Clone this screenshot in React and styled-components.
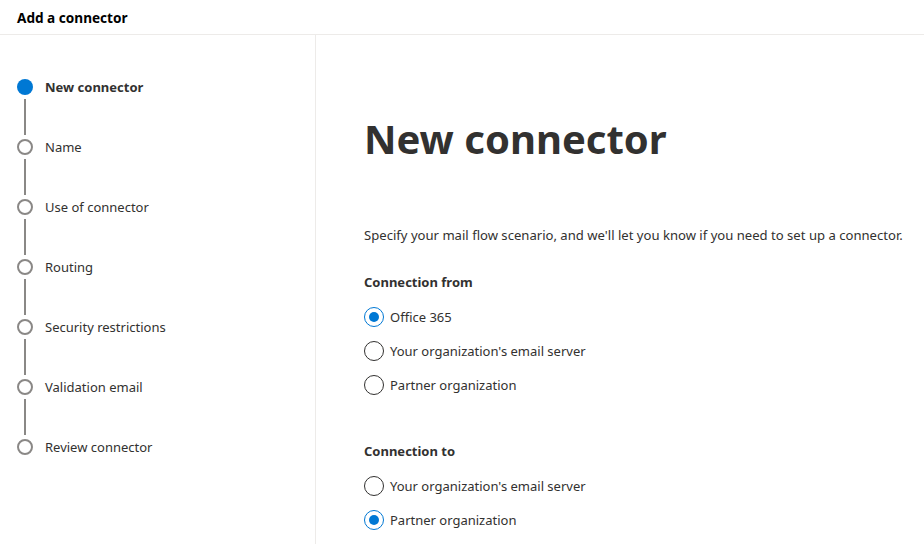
import React from 'react';
import styled, { createGlobalStyle } from 'styled-components';

const GlobalStyle = createGlobalStyle`
    html, body {
        margin: 0;
        padding: 0;
        background: #fff;
        font-family: "Noto Sans", "Open Sans", sans-serif;
        color: #323130;
    }
`;

const Page = styled.div`
    display: flex;
    flex-direction: column;
    height: 100vh;
    overflow: hidden;
`;

const Header = styled.header`
    height: 34px;
    flex-shrink: 0;
    padding-left: 17px;
    display: flex;
    align-items: center;
    border-bottom: 1px solid #edebe9;
    font-size: 13.6px;
    font-weight: 700;
    color: #000;
`;

const Body = styled.div`
    display: flex;
    flex: 1;
`;

const Nav = styled.nav`
    width: 316px;
    flex-shrink: 0;
    border-right: 1px solid #edebe9;
    padding: 44px 0 0 17px;
    box-sizing: border-box;
`;

const Step = styled.div`
    display: grid;
    grid-template-columns: 16px 1fr;
    column-gap: 12px;
    align-items: center;
`;

const Dot = styled.span`
    width: 16px;
    height: 16px;
    border-radius: 50%;
    box-sizing: border-box;
    background: ${props => (props.active ? '#0078d4' : '#fff')};
    border: ${props => (props.active ? 'none' : '2px solid #8a8886')};
`;

const StepLabel = styled.span`
    font-size: 13px;
    font-weight: ${props => (props.active ? 700 : 400)};
    color: #323130;
    line-height: 16px;
`;

const Connector = styled.div`
    width: 2px;
    height: 36px;
    margin: 4px 0 4px 7px;
    background: #8a8886;
`;

const Main = styled.main`
    flex: 1;
    padding: 78px 0 0 48px;
`;

const Title = styled.h1`
    margin: 0;
    font-size: 40px;
    font-weight: 700;
    line-height: 52px;
    color: #323130;
`;

const Intro = styled.p`
    margin: 60px 0 0;
    font-size: 13.1px;
    line-height: 20px;
`;

const Group = styled.fieldset`
    border: none;
    margin: ${props => props.top}px 0 0;
    padding: 0;
`;

const Legend = styled.legend`
    padding: 0;
    font-size: 13px;
    font-weight: 700;
    line-height: 20px;
    margin-bottom: 15px;
`;

const Option = styled.label`
    display: flex;
    align-items: center;
    gap: 6px;
    height: 20px;
    margin-bottom: 14px;
    font-size: 13px;
`;

const Radio = styled.span`
    width: 20px;
    height: 20px;
    border-radius: 50%;
    box-sizing: border-box;
    border: 1px solid ${props => (props.checked ? '#0078d4' : '#323130')};
    display: flex;
    align-items: center;
    justify-content: center;

    &::after {
        content: '';
        width: 10px;
        height: 10px;
        border-radius: 50%;
        background: #0078d4;
        display: ${props => (props.checked ? 'block' : 'none')};
    }
`;

const steps = [
    'New connector',
    'Name',
    'Use of connector',
    'Routing',
    'Security restrictions',
    'Validation email',
    'Review connector',
];

const RadioGroup = ({ title, options, selected, top }) => (
    <Group top={top}>
        <Legend>{title}</Legend>
        {options.map(opt => (
            <Option key={opt}>
                <Radio checked={opt === selected} />
                {opt}
            </Option>
        ))}
    </Group>
);

const App = () => (
    <Page>
        <GlobalStyle />
        <Header>Add a connector</Header>
        <Body>
            <Nav>
                {steps.map((s, i) => (
                    <React.Fragment key={s}>
                        <Step>
                            <Dot active={i === 0} />
                            <StepLabel active={i === 0}>{s}</StepLabel>
                        </Step>
                        {i < steps.length - 1 && <Connector />}
                    </React.Fragment>
                ))}
            </Nav>
            <Main>
                <Title>New connector</Title>
                <Intro>
                    Specify your mail flow scenario, and we'll let you know if you need to set up a connector.
                </Intro>
                <RadioGroup
                    top={27}
                    title="Connection from"
                    options={['Office 365', "Your organization's email server", 'Partner organization']}
                    selected="Office 365"
                />
                <RadioGroup
                    top={32}
                    title="Connection to"
                    options={["Your organization's email server", 'Partner organization']}
                    selected="Partner organization"
                />
            </Main>
        </Body>
    </Page>
);

export default App;
